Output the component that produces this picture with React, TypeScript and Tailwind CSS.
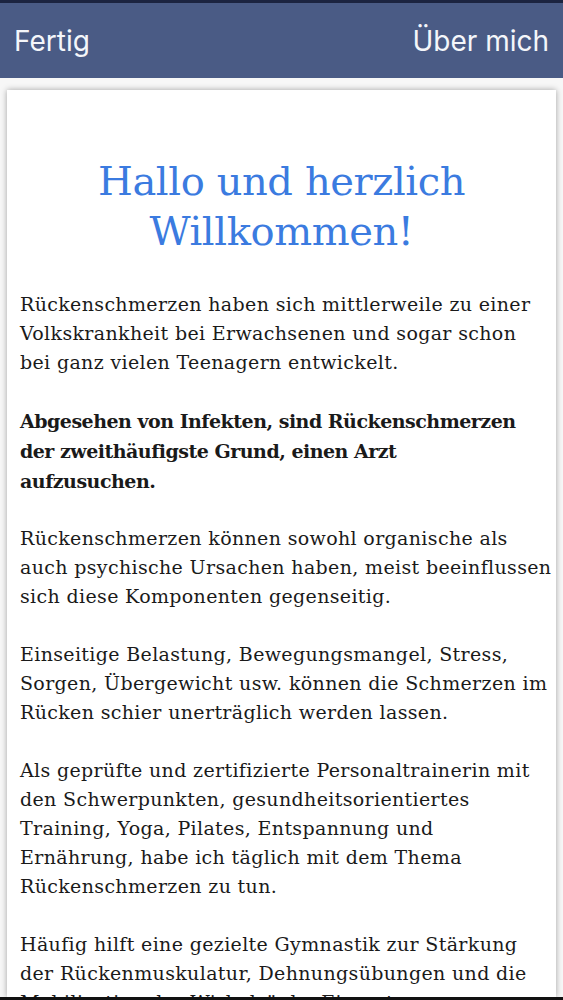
const paragraphs: { lines: string[]; bold?: boolean }[] = [
  {
    lines: [
      "Rückenschmerzen haben sich mittlerweile zu einer",
      "Volkskrankheit bei Erwachsenen und sogar schon",
      "bei ganz vielen Teenagern entwickelt.",
    ],
  },
  {
    lines: [
      "Abgesehen von Infekten, sind Rückenschmerzen",
      "der zweithäufigste Grund, einen Arzt",
      "aufzusuchen.",
    ],
    bold: true,
  },
  {
    lines: [
      "Rückenschmerzen können sowohl organische als",
      "auch psychische Ursachen haben, meist beeinflussen",
      "sich diese Komponenten gegenseitig.",
    ],
  },
  {
    lines: [
      "Einseitige Belastung, Bewegungsmangel, Stress,",
      "Sorgen, Übergewicht usw. können die Schmerzen im",
      "Rücken schier unerträglich werden lassen.",
    ],
  },
  {
    lines: [
      "Als geprüfte und zertifizierte Personaltrainerin mit",
      "den Schwerpunkten, gesundheitsorientiertes",
      "Training, Yoga, Pilates, Entspannung und",
      "Ernährung, habe ich täglich mit dem Thema",
      "Rückenschmerzen zu tun.",
    ],
  },
  {
    lines: [
      "Häufig hilft eine gezielte Gymnastik zur Stärkung",
      "der Rückenmuskulatur, Dehnungsübungen und die",
      "Mobilisation der Wirbelsäule. Ein gutes",
      "Rückentraining ist die beste Vorbeugung.",
    ],
  },
];

export default function App() {
  return (
    <div className="h-[1000px] w-full overflow-hidden bg-[#f7f7f7] flex flex-col">
      <header className="h-[78px] shrink-0 bg-[#4a5b85] border-t-[3px] border-[#1c2440] flex items-center justify-between px-[14px] font-['Inter',sans-serif] text-[28px] text-[#f4f6fa]">
        <span>Fertig</span>
        <span>Über mich</span>
      </header>

      <main className="flex-1 mx-[7px] mt-[12px] bg-white shadow-[0_0_6px_rgba(0,0,0,0.35)] px-[13px] pt-[66px] overflow-hidden font-['DejaVu_Serif',serif] text-[#1a1a1a]">
        <h1 className="text-center text-[40px] leading-[50px] text-[#3b7be0] mb-[34px] tracking-[-0.4px]">
          Hallo und herzlich
          <br />
          Willkommen!
        </h1>
        {paragraphs.map((p, i) => (
          <p
            key={i}
            className={
              p.bold
                ? "whitespace-nowrap text-[19px] leading-[30px] font-bold mb-[28px] tracking-[-0.5px]"
                : "whitespace-nowrap text-[19px] leading-[29px] mb-[29px] tracking-[0.35px]"
            }
          >
            {p.lines.map((line, j) => (
              <span key={j} className="block">
                {line}
              </span>
            ))}
          </p>
        ))}
      </main>
      <div className="h-[3px] shrink-0 bg-[#111]" />
    </div>
  );
}
